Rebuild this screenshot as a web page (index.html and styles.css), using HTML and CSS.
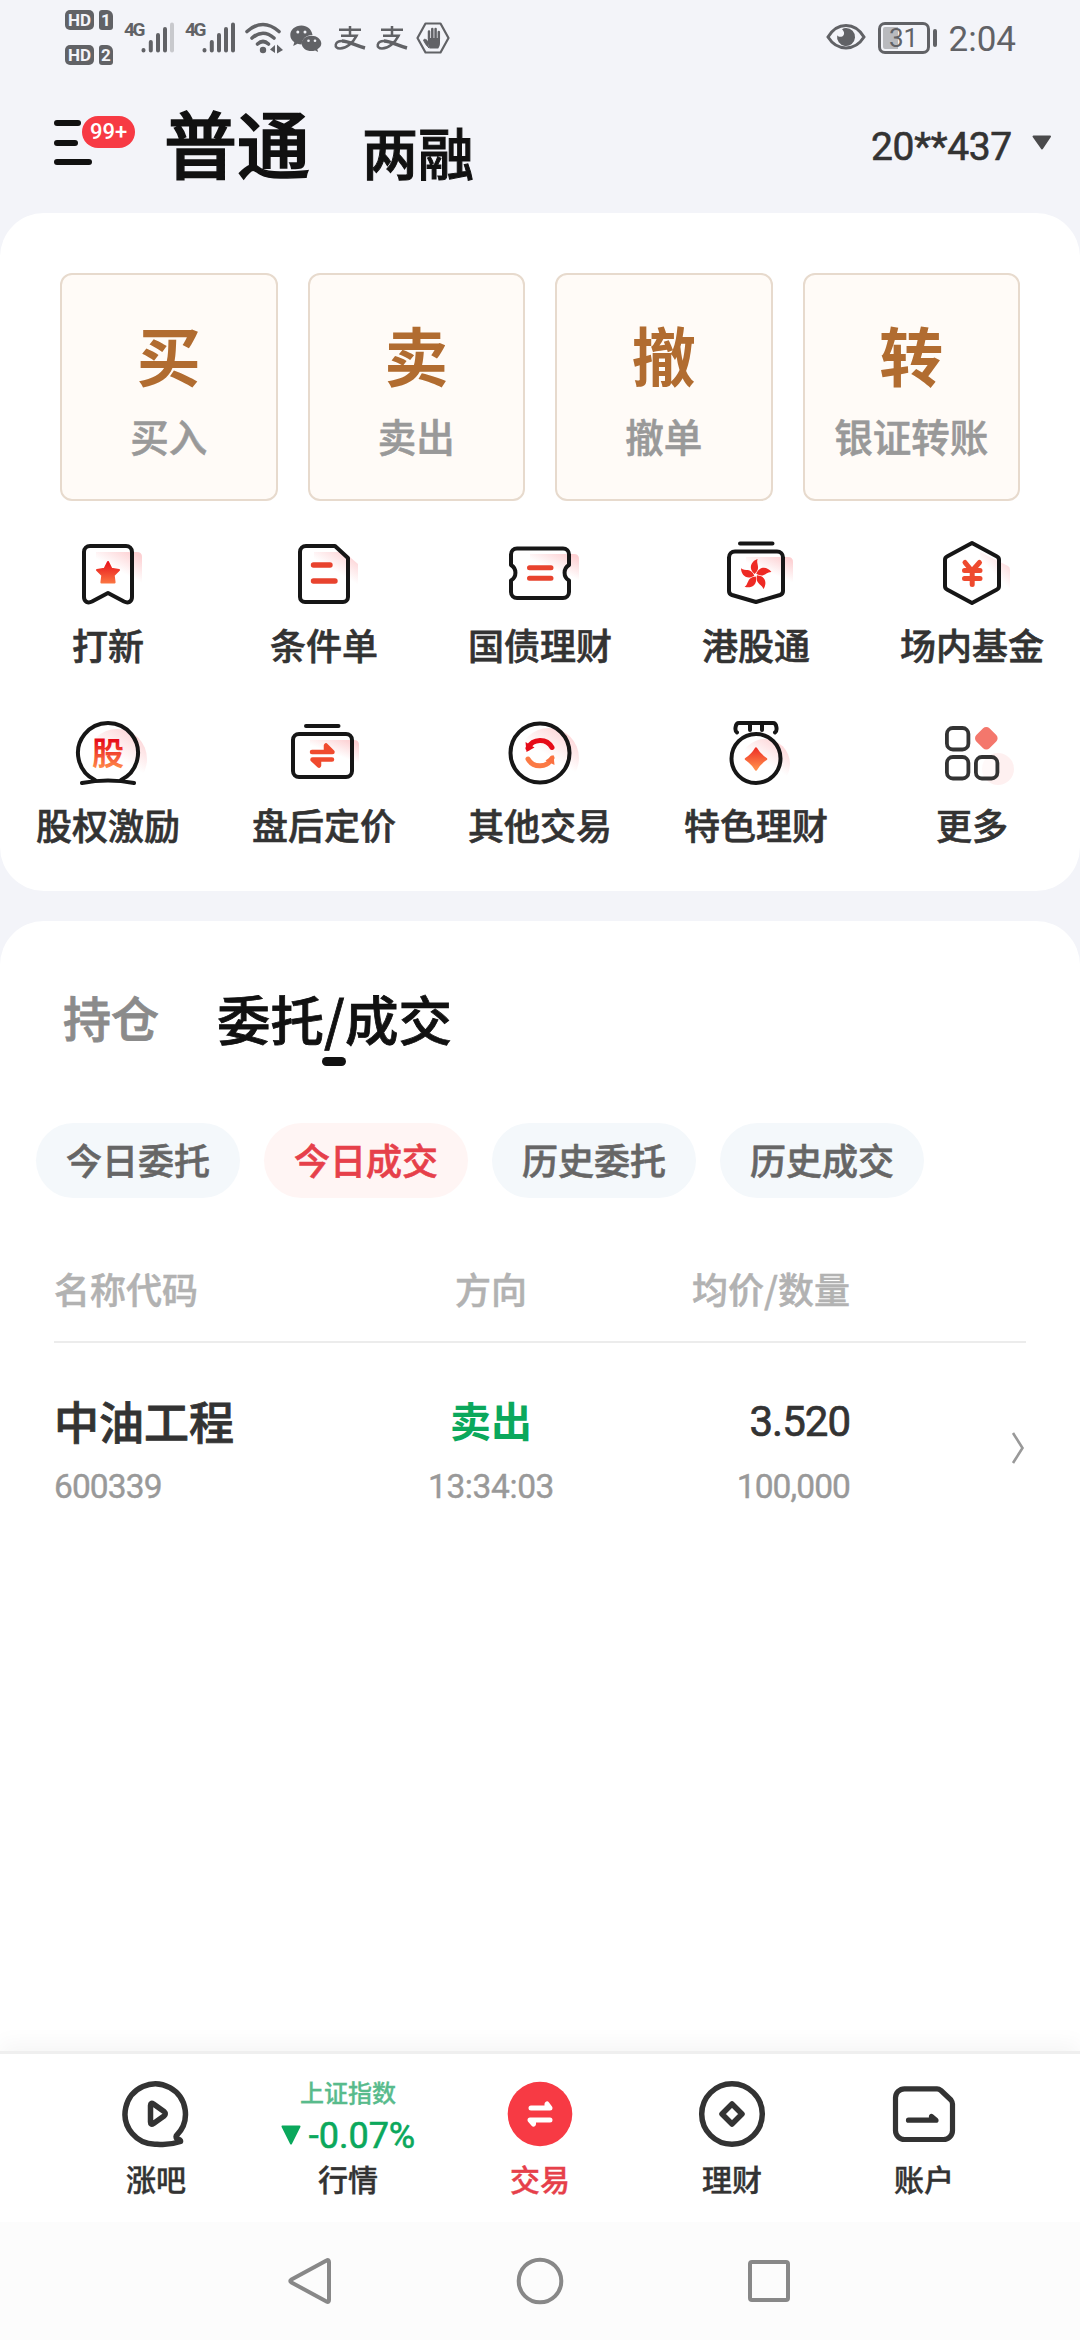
FILE: index.html
```html
<!DOCTYPE html>
<html lang="zh-CN">
<head>
<meta charset="utf-8">
<title>交易</title>
<link rel="stylesheet" href="styles.css">
</head>
<body>
<svg class="defs" aria-hidden="true">
  <defs>
    <linearGradient id="redU" gradientUnits="userSpaceOnUse" x1="0" y1="26" x2="0" y2="54"><stop offset="0" stop-color="#e60b18"/><stop offset="1" stop-color="#ff8a4a"/></linearGradient>
    <linearGradient id="redSoft" gradientUnits="userSpaceOnUse" x1="0" y1="26" x2="0" y2="58"><stop offset="0" stop-color="#ee2a24"/><stop offset="1" stop-color="#fa7040"/></linearGradient>
    <linearGradient id="pink" x1="0.9" y1="0.050" x2="0.5" y2="0.700"><stop offset="0" stop-color="#f63a44" stop-opacity="0.24"/><stop offset="0.75" stop-color="#f63a44" stop-opacity="0"/></linearGradient>
  </defs>
</svg>

<header class="status">
  <div class="status-left">
    <div class="hd-stack">
      <div class="hd-row"><span class="hd">HD</span><span class="sim">1</span></div>
      <div class="hd-row"><span class="hd">HD</span><span class="sim">2</span></div>
    </div>
    <div class="cell">
      <span class="net">4G</span>
      <svg width="34" height="32" viewBox="0 0 34 32"><g stroke="#616266" stroke-width="4" stroke-linecap="round"><path d="M2.500 28v0.500M9.800 20v8.500M17 13v15.500M24 7v21.500"/><path d="M31 2.500v26" stroke="#c8c9cd"/></g></svg>
    </div>
    <div class="cell">
      <span class="net">4G</span>
      <svg width="34" height="32" viewBox="0 0 34 32"><g stroke="#616266" stroke-width="4" stroke-linecap="round"><path d="M2.500 28v0.500M9.800 20v8.500M17 13v15.500M24 7v21.500M31 2.500v26"/></g></svg>
    </div>
    <svg class="wifi" width="38" height="32" viewBox="0 0 38 32"><g fill="none" stroke="#616266" stroke-width="3.600" stroke-linecap="round"><path d="M2 9.500Q18 -4.500 34 9.500M7 16Q18 6.500 29 16M12.500 22Q18 17 23.500 22"/></g><circle cx="18" cy="28" r="3.200" fill="#616266"/><path d="M30 23v8l-5-3.500zM32 22.500l6 5.500-6 3.500z" fill="#616266"/></svg>
    <svg class="wechat" width="32" height="27" viewBox="0 0 32 27"><path d="M11.500 0.500C5 0.500 0.300 4.800 0.300 10c0 3 1.500 5.400 4 7.200L3.200 21l4.300-2.200c1.400.4 2.700.6 4.200.6.300-6 5-9.700 10.800-9.500C21.500 4 17 .5 11.500.5z" fill="#616266"/><path d="M21.500 10.700c-5.600 0-9.800 3.500-9.800 7.700 0 4.400 4.500 7.700 9.800 7.700 1.200 0 2.400-.3 3.600-.6l3 1.500-.8-2.700c2.500-1.700 4-3.600 4-5.900 0-4.200-4.500-7.700-9.800-7.700z" fill="#616266"/><g fill="#f3f4f9"><circle cx="7.800" cy="7" r="1.500"/><circle cx="15" cy="7" r="1.500"/><circle cx="18.500" cy="15.800" r="1.300"/><circle cx="25" cy="15.800" r="1.300"/></g></svg>
    <svg class="pay" width="32" height="26" viewBox="0 0 32 26"><g fill="none" stroke="#616266" stroke-width="2.500"><path d="M5 3.800H27M16 0V10M7 9.800H22.500C19 16.500 12.500 22.500 6 22.500C-.5 22.500 .5 15 8 15"/><path d="M8 15C14 15 22 19.500 31 22" stroke-width="3.400"/></g></svg>
    <svg class="pay" width="32" height="26" viewBox="0 0 32 26"><g fill="none" stroke="#616266" stroke-width="2.500"><path d="M5 3.800H27M16 0V10M7 9.800H22.500C19 16.500 12.500 22.500 6 22.500C-.5 22.500 .5 15 8 15"/><path d="M8 15C14 15 22 19.500 31 22" stroke-width="3.400"/></g></svg>
    <svg class="hex" width="34" height="32" viewBox="0 0 34 32"><path d="M9.500 1.500h15L32.500 16l-8 14.500h-15L1.500 16z" fill="none" stroke="#616266" stroke-width="2.200" stroke-linejoin="round"/><path d="M13 26c-2-2-4.500-5-5.500-8 1-1.500 3-.5 4.500 1.500" fill="#616266" stroke="#616266" stroke-linejoin="round"/><path d="M12 16h12v5c0 3-1 4-1.800 5.500H13.500L12 22z" fill="#616266"/><path d="M13 17V9.500M16.300 17V7M19.600 17V7M22.800 17V10" stroke="#616266" stroke-width="2.500" stroke-linecap="round"/></svg>
  </div>
  <div class="status-right">
    <svg width="40" height="28" viewBox="0 0 40 28"><path d="M2 14C11-1.500 29-1.500 38 14C29 28.500 11 28.500 2 14z" fill="none" stroke="#616266" stroke-width="3"/><path d="M20 5a9 9 0 1 1-8.800 7.300c1.500 2 5 2 6.300 0C19 10 17.500 7.500 16 6.200A9 9 0 0 1 20 5z" fill="#616266"/></svg>
    <div class="battery"><span>31</span></div><i class="nub"></i>
    <span class="clock">2:04</span>
  </div>
</header>

<div class="topbar">
  <div class="menu">
    <i class="bar bar-a"></i><i class="bar bar-b"></i><i class="bar bar-c"></i>
    <span class="badge">99+</span>
  </div>
  <div class="modes"><span class="mode-on">普通</span><span class="mode">两融</span></div>
  <div class="account"><span>20**437</span><svg width="20" height="15" viewBox="0 0 20 15"><path d="M1.500 1.500h16.500L10 13.500z" fill="#4a4a4c" stroke="#4a4a4c" stroke-width="2" stroke-linejoin="round"/></svg></div>
</div>

<section class="card">
  <div class="actions">
    <div class="action"><b>买</b><span>买入</span></div>
    <div class="action"><b>卖</b><span>卖出</span></div>
    <div class="action"><b>撤</b><span>撤单</span></div>
    <div class="action"><b>转</b><span>银证转账</span></div>
  </div>
  <div class="tools">
    <div class="tool">
      <svg viewBox="0 0 100 80"><path d="M38 18H79q5 0 5 5V58H38z" fill="url(#pink)"/><path class="ol" d="M32 12H68a6 6 0 0 1 6 6V63c0 5-4 6.500-8 4.500L50 59L34 67.500c-4 2-8 .5-8-4.500V18a6 6 0 0 1 6-6z"/><path d="M50 28l3.400 6.800 7.600 1.200-5.300 5.400.9 7.100H43.400l.9-7.100L39 36l7.600-1.200z" fill="url(#redU)" stroke="url(#redU)" stroke-width="2" stroke-linejoin="round"/></svg>
      <span>打新</span>
    </div>
    <div class="tool">
      <svg viewBox="0 0 100 80"><path d="M40 18H70L84 30V60H40z" fill="url(#pink)"/><path class="ol" d="M32 12H61L74 24V63a5 5 0 0 1-5 5H31a5 5 0 0 1-5-5V18a6 6 0 0 1 6-6z"/><path d="M39.500 31H56M39.500 47H61" stroke="#e8432e" stroke-width="5.400" stroke-linecap="round"/></svg>
      <span>条件单</span>
    </div>
    <div class="tool">
      <svg viewBox="0 0 100 80"><path d="M40 20H84q5 0 5 5V54H40z" fill="url(#pink)"/><path class="ol" d="M27 14.500H73a6 6 0 0 1 6 6V31a9 9 0 0 0 0 15.500V58a6 6 0 0 1-6 6H27a6 6 0 0 1-6-6V46.500A9 9 0 0 0 21 31V20.500a6 6 0 0 1 6-6z"/><path d="M39.500 33.700H61M39.500 44.300H61" stroke="#e8432e" stroke-width="5" stroke-linecap="round"/></svg>
      <span>国债理财</span>
    </div>
    <div class="tool">
      <svg viewBox="0 0 100 80"><path d="M40 23H82q5 0 5 5V56H40z" fill="url(#pink)"/><path class="ol" d="M34 9.500H66.500M29 17.500H71a6 6 0 0 1 6 6V57q0 3-3 4L50 68L26 61q-3-1-3-4V23.500a6 6 0 0 1 6-6z"/><g fill="url(#redSoft)" transform="translate(49.600 41)"><g id="petals"><path d="M-1-1C-8-7-4-14 2-16C0-11 6-7-1-1z"/><path d="M-1-1C-8-7-4-14 2-16C0-11 6-7-1-1z" transform="rotate(72)"/><path d="M-1-1C-8-7-4-14 2-16C0-11 6-7-1-1z" transform="rotate(144)"/><path d="M-1-1C-8-7-4-14 2-16C0-11 6-7-1-1z" transform="rotate(216)"/><path d="M-1-1C-8-7-4-14 2-16C0-11 6-7-1-1z" transform="rotate(288)"/></g></g></svg>
      <span>港股通</span>
    </div>
    <div class="tool">
      <svg viewBox="0 0 100 80"><path d="M58 18L86 32q2 1 2 4V66L60 60z" fill="url(#pink)"/><path class="ol" d="M50 9L75 22.500q2 1 2 3.500V52q0 2.500-2 3.500L50 69L25 55.500q-2-1-2-3.500V26q0-2.500 2-3.500z"/><path d="M43 28.500L50 37L57.500 28.500M42.500 36.500H58M42.500 44.500H58M50.200 37V50.500" fill="none" stroke="#ee4a2e" stroke-width="5" stroke-linecap="round"/></svg>
      <span>场内基金</span>
    </div>
    <div class="tool">
      <svg viewBox="0 0 100 80"><circle cx="59" cy="45" r="30" fill="url(#pink)"/><path class="ol" d="M37 66A30 30 0 1 1 63 66M24 69Q50 64 76 69"/><text x="50" y="51" text-anchor="middle" font-size="32" font-weight="700" fill="url(#redU)">股</text></svg>
      <span>股权激励</span>
    </div>
    <div class="tool">
      <svg viewBox="0 0 100 80"><path d="M36 26H80q5 0 5 5V56H36z" fill="url(#pink)"/><path class="ol" d="M32 12H64.500M25 20H72a6 6 0 0 1 6 6V57a6 6 0 0 1-6 6H25a6 6 0 0 1-6-6V26a6 6 0 0 1 6-6z"/><path d="M38 38H58.500L52 31.500V37M58 45.500H38.500L45 51.500V46" fill="none" stroke="#f04a2e" stroke-width="4.500" stroke-linecap="round" stroke-linejoin="round"/></svg>
      <span>盘后定价</span>
    </div>
    <div class="tool">
      <svg viewBox="0 0 100 80"><circle cx="59" cy="44" r="30" fill="url(#pink)"/><circle class="ol" cx="50" cy="39" r="29.500"/><g fill="none" stroke-width="5" stroke-linecap="round"><path d="M38 34A13.500 13.500 0 0 1 62 33.500" stroke="#e60b18"/><path d="M38 45A13.500 13.500 0 0 0 62 44" stroke="#fb7a45"/></g><path d="M35.500 28L36.500 38L44.500 33.500z" fill="#e60b18"/><path d="M64.500 51L63.500 41L55.500 46.500z" fill="#fb7040"/></svg>
      <span>其他交易</span>
    </div>
    <div class="tool">
      <svg viewBox="0 0 100 80"><circle cx="59" cy="50" r="25" fill="url(#pink)"/><circle class="ol" cx="50" cy="44.500" r="24.500"/><path class="ol" d="M31 18.500C28.500 17 29 9 33 9H67C71 9 71.500 17 69 18.500M44 9.500V16M56 9.500V16"/><path d="M50 34.500C52.500 39 55.500 42 60 45C55.500 48 52.500 51 50 55.500C47.500 51 44.500 48 40 45C44.500 42 47.500 39 50 34.500z" fill="url(#redU)" stroke="url(#redU)" stroke-width="2.500" stroke-linejoin="round"/></svg>
      <span>特色理财</span>
    </div>
    <div class="tool">
      <svg viewBox="0 0 100 80"><circle cx="76" cy="55" r="16" fill="#f63a44" opacity="0.080"/><g fill="none" stroke="#333" stroke-width="3.800"><rect x="24.900" y="14" width="21.500" height="21.500" rx="6"/><rect x="24.900" y="43" width="21.500" height="21.500" rx="6"/><rect x="53.900" y="43" width="21.500" height="21.500" rx="6" fill="#fff" fill-opacity="0.600"/></g><rect x="55" y="15" width="18.600" height="18.600" rx="4.500" fill="#f4776c" transform="rotate(45 64.300 24.300)"/></svg>
      <span>更多</span>
    </div>
  </div>
</section>

<main class="card trades">
  <div class="tabs"><div class="tab">持仓</div><div class="tab tab-on">委托/成交<i></i></div></div>
  <div class="pills"><span class="pill">今日委托</span><span class="pill pill-on">今日成交</span><span class="pill">历史委托</span><span class="pill">历史成交</span></div>
  <div class="table">
    <div class="row head"><span>名称代码</span><span class="mid">方向</span><span class="end">均价/数量</span></div>
    <div class="row">
      <div><div class="name">中油工程</div><div class="sub">600339</div></div>
      <div class="mid"><div class="side">卖出</div><div class="sub time">13:34:03</div></div>
      <div class="end"><div class="price">3.520</div><div class="sub">100,000</div></div>
      <svg class="chev" width="14" height="32" viewBox="0 0 14 32"><path d="M2 1L11.500 16L2 31" fill="none" stroke="#999" stroke-width="2.600"/></svg>
    </div>
  </div>
</main>

<nav class="nav">
  <div class="nav-item">
    <svg viewBox="0 0 70 70"><g fill="none" stroke="#333" stroke-width="5.500" stroke-linejoin="round" stroke-linecap="round"><path d="M55.500 56.500A30.200 30.200 0 1 0 36 65.200Q48 66.500 59.500 62.500Q60 60.500 56 60Q54.500 58 55.500 56.500"/><path d="M29.500 26.500Q29.500 23 32.500 25L43 32.500Q45.500 35 43 37L32.500 44.500Q29.500 46.500 29.500 43z"/></g></svg>
    <span>涨吧</span>
  </div>
  <div class="nav-item">
    <div class="index"><div class="index-name">上证指数</div><div class="index-val"><svg width="20" height="20" viewBox="0 0 20 20"><path d="M1.500 1.500h17L10 18.500z" fill="#0ba85c" stroke="#0ba85c" stroke-width="2" stroke-linejoin="round"/></svg><span>-0.07%</span></div></div>
    <span>行情</span>
  </div>
  <div class="nav-item active">
    <svg viewBox="0 0 70 70"><circle cx="35" cy="35" r="32.300" fill="#f73a44"/><path d="M26 29H45L42 25V29M45 41H25L28.500 45V41" fill="#fff" stroke="#fff" stroke-width="5" stroke-linecap="round" stroke-linejoin="round"/></svg>
    <span>交易</span>
  </div>
  <div class="nav-item">
    <svg viewBox="0 0 70 70"><circle cx="35" cy="35" r="30.300" fill="none" stroke="#333" stroke-width="5.500"/><path d="M35 25L45 35L35 45L25 35z" fill="none" stroke="#333" stroke-width="5.500" stroke-linejoin="round"/></svg>
    <span>理财</span>
  </div>
  <div class="nav-item">
    <svg viewBox="0 0 70 70"><g fill="none" stroke="#333" stroke-width="5.200" stroke-linejoin="round" stroke-linecap="round"><path d="M15.500 9.800H48Q50 9.800 52 11.500L62 21Q63.500 23 63.500 25V51.500A9 9 0 0 1 54.500 60.500H15.500A9 9 0 0 1 6.500 51.500V18.800A9 9 0 0 1 15.500 9.800z"/><path d="M19.500 41.200H47L42.500 37.500V41"/></g></svg>
    <span>账户</span>
  </div>
</nav>

<footer class="sysnav">
  <svg viewBox="0 0 50 50"><path d="M40.500 4.500Q43 3 43 6V44Q43 47 40.500 45.500L5.500 26.500Q3 25 5.500 23.500z" fill="none" stroke="#888" stroke-width="4"/></svg>
  <svg viewBox="0 0 50 50"><circle cx="25" cy="25" r="21.300" fill="none" stroke="#888" stroke-width="4"/></svg>
  <svg viewBox="0 0 50 50"><rect x="6" y="6" width="38" height="38" rx="2" fill="none" stroke="#888" stroke-width="4"/></svg>
</footer>
</body>
</html>
```

FILE: styles.css
```css
* { box-sizing: border-box; }
body {
  margin: 0; width: 1080px; height: 2340px; overflow: hidden;
  display: flex; flex-direction: column;
  background: #f3f4f9; color: #333;
  font-family: "Noto Sans CJK SC", sans-serif; font-weight: 500;
}
svg { display: block; flex: none; }
i { display: block; }
.defs { position: absolute; width: 0; height: 0; }

.status { height: 75px; display: flex; justify-content: space-between; padding: 10px 64px 0 65px; color: #616266; font-family: Roboto, sans-serif; }
.status-left, .status-right { display: flex; align-items: flex-start; }
.hd-stack { display: flex; flex-direction: column; gap: 15px; width: 59px; }
.hd-row { display: flex; gap: 5px; }
.hd, .sim { height: 20px; line-height: 20px; border-radius: 5px; background: #616266; color: #f3f4f9; font-size: 17px; font-weight: 700; text-align: center; }
.hd { width: 29px; }
.sim { width: 14px; border-radius: 3px 6px 3px 3px; }
.cell { display: flex; width: 61px; padding-top: 12px; }
.net { width: 17px; font-size: 19px; line-height: 15px; font-weight: 700; letter-spacing: -2.500px; }
.wifi { margin: 12px 0 0 -1px; }
.wechat { margin: 15px 0 0 7px; }
.pay { margin: 16px 0 0 10px; }
.wechat + .pay { margin-left: 12px; }
.hex { margin: 12px 0 0 8px; }
.status-right { padding-top: 12px; }
.status-right > svg { margin: 1px 12px 0 0; }
.battery { width: 52px; height: 32px; border: 3px solid #616266; border-radius: 7px; padding: 2px; font-size: 26px; line-height: 22px; text-align: center; }
.battery span { display: block; background: linear-gradient(90deg, #b9babe 15px, transparent 15px); border-radius: 2px; font-weight: 400; }
.nub { width: 4px; height: 18px; margin: 7px 0 0 3px; border-radius: 2px; background: #616266; }
.clock { margin-left: 12px; font-size: 35px; line-height: 35px; font-weight: 400; }

.topbar { height: 138px; display: flex; padding: 0 28px 0 54px; align-items: flex-start; }
.menu { position: relative; width: 110px; padding-top: 45px; display: flex; flex-direction: column; gap: 13.500px; }
.bar { height: 6px; border-radius: 3px; background: #111; }
.bar-a { width: 27px; }
.bar-b { width: 24px; }
.bar-c { width: 38px; }
.badge { position: absolute; left: 28px; top: 41px; width: 53px; height: 32px; border-radius: 16px; background: #f73a44; color: #fff; font: 500 22px/32px Roboto, sans-serif; text-align: center; }
.modes { display: flex; align-items: flex-start; gap: 52px; color: #111; padding-top: 26px; }
.mode-on { font-size: 73px; line-height: 80px; -webkit-text-stroke: 1.500px; }
.mode { font-size: 56px; line-height: 64px; margin-top: 18px; -webkit-text-stroke: 1px; }
.account { margin-left: auto; display: flex; align-items: center; gap: 20px; padding-top: 50px; font: 400 39px/44px Roboto, sans-serif; -webkit-text-stroke: 0.600px; letter-spacing: -0.300px; }
.account svg { margin-top: -9px; }

.card { background: #fff; border-radius: 44px; }
.card:not(.trades) { height: 678px; padding-top: 60px; }
.actions { display: grid; grid-template-columns: repeat(4, 1fr); gap: 30px; margin: 0 60px; }
.action { height: 228px; border: 2px solid #e7dacd; border-radius: 12px; background: #fffbf7; display: flex; flex-direction: column; align-items: center; padding-top: 38px; }
.action b { font-size: 64px; line-height: 80px; font-weight: 700; color: #b16c30; }
.action span { font-size: 38.500px; line-height: 50px; margin-top: 17px; color: #999; -webkit-text-stroke: 0.600px; }
.tools { display: grid; grid-template-columns: repeat(5, 216px); row-gap: 48px; margin-top: 33px; }
.tool { display: flex; flex-direction: column; align-items: center; }
.tool svg { width: 100px; height: 80px; }
.tool > span { font-size: 36px; line-height: 44px; margin-top: 8px; -webkit-text-stroke: 0.600px; }
.ol { fill: none; stroke: #161616; stroke-width: 4; stroke-linecap: round; stroke-linejoin: round; }

.trades { margin-top: 30px; flex: 1; border-radius: 44px 44px 0 0; padding-top: 64px; }
.tabs { display: flex; height: 81px; padding-left: 63px; gap: 58px; }
.tab { font-size: 48px; line-height: 63px; color: #8b8b8b; -webkit-text-stroke: 0.800px; }
.tab-on { font-size: 53.500px; line-height: 65px; color: #111; display: flex; flex-direction: column; align-items: center; }
.tab-on i { width: 24px; height: 9px; border-radius: 4.500px; background: #111; margin-top: 7px; }
.pills { display: flex; gap: 24px; margin: 57px 0 0 36px; }
.pill { width: 204px; height: 75px; border-radius: 38px; background: #f4f8fb; color: #666; font-size: 36px; line-height: 73px; text-align: center; -webkit-text-stroke: 0.600px; }
.pill-on { background: #fff5f4; color: #e6404a; }
.table { margin: 66px 54px 0; }
.row { display: grid; grid-template-columns: 277px 320px 199px 1fr; padding-top: 51px; }
.head { padding: 0 0 29px; border-bottom: 2px solid #ececec; font-size: 36px; line-height: 48px; color: #b2b2b2; -webkit-text-stroke: 0.500px; }
.mid { text-align: center; }
.end { text-align: right; }
.name { font-size: 45px; line-height: 53px; height: 50px; -webkit-text-stroke: 0.800px; }
.side { font-size: 41px; line-height: 51px; height: 50px; color: #0ba85c; font-weight: 700; }
.price { font: 400 42px/56px Roboto, sans-serif; letter-spacing: -1px; height: 50px; -webkit-text-stroke: 0.700px; }
.sub { font: 400 33.500px/41px Roboto, sans-serif; letter-spacing: -0.900px; color: #999; margin-top: 22px; -webkit-text-stroke: 0.400px; }
.time { letter-spacing: -0.400px; }
.chev { justify-self: end; margin: 38px 1px 0 0; }

.nav { height: 171px; display: flex; padding: 0 60px; background: #fff; border-top: 3px solid #efefef; box-shadow: 0 -8px 20px rgba(0, 20, 20, 0.040); }
.nav-item { width: 192px; display: flex; flex-direction: column; align-items: center; padding-top: 25px; }
.nav-item > svg { width: 70px; height: 70px; }
.nav-item > span { font-size: 30px; line-height: 40px; margin-top: 9px; -webkit-text-stroke: 0.400px; }
.active > span { color: #e6404a; }
.index { height: 70px; display: flex; flex-direction: column; align-items: center; }
.index-name { font-size: 24px; line-height: 28px; color: #58bb8c; margin-top: -1px; -webkit-text-stroke: 0.300px; }
.index-val { display: flex; align-items: center; gap: 8px; color: #0ba85c; font: 400 36px/44px Roboto, sans-serif; margin-top: 8px; -webkit-text-stroke: 0.600px; }
.index-val svg { margin-top: -3px; }

.sysnav { height: 118px; background: #fcfcfc; display: flex; justify-content: center; gap: 179px; padding-top: 34px; }
.sysnav svg { width: 50px; height: 50px; }
```
